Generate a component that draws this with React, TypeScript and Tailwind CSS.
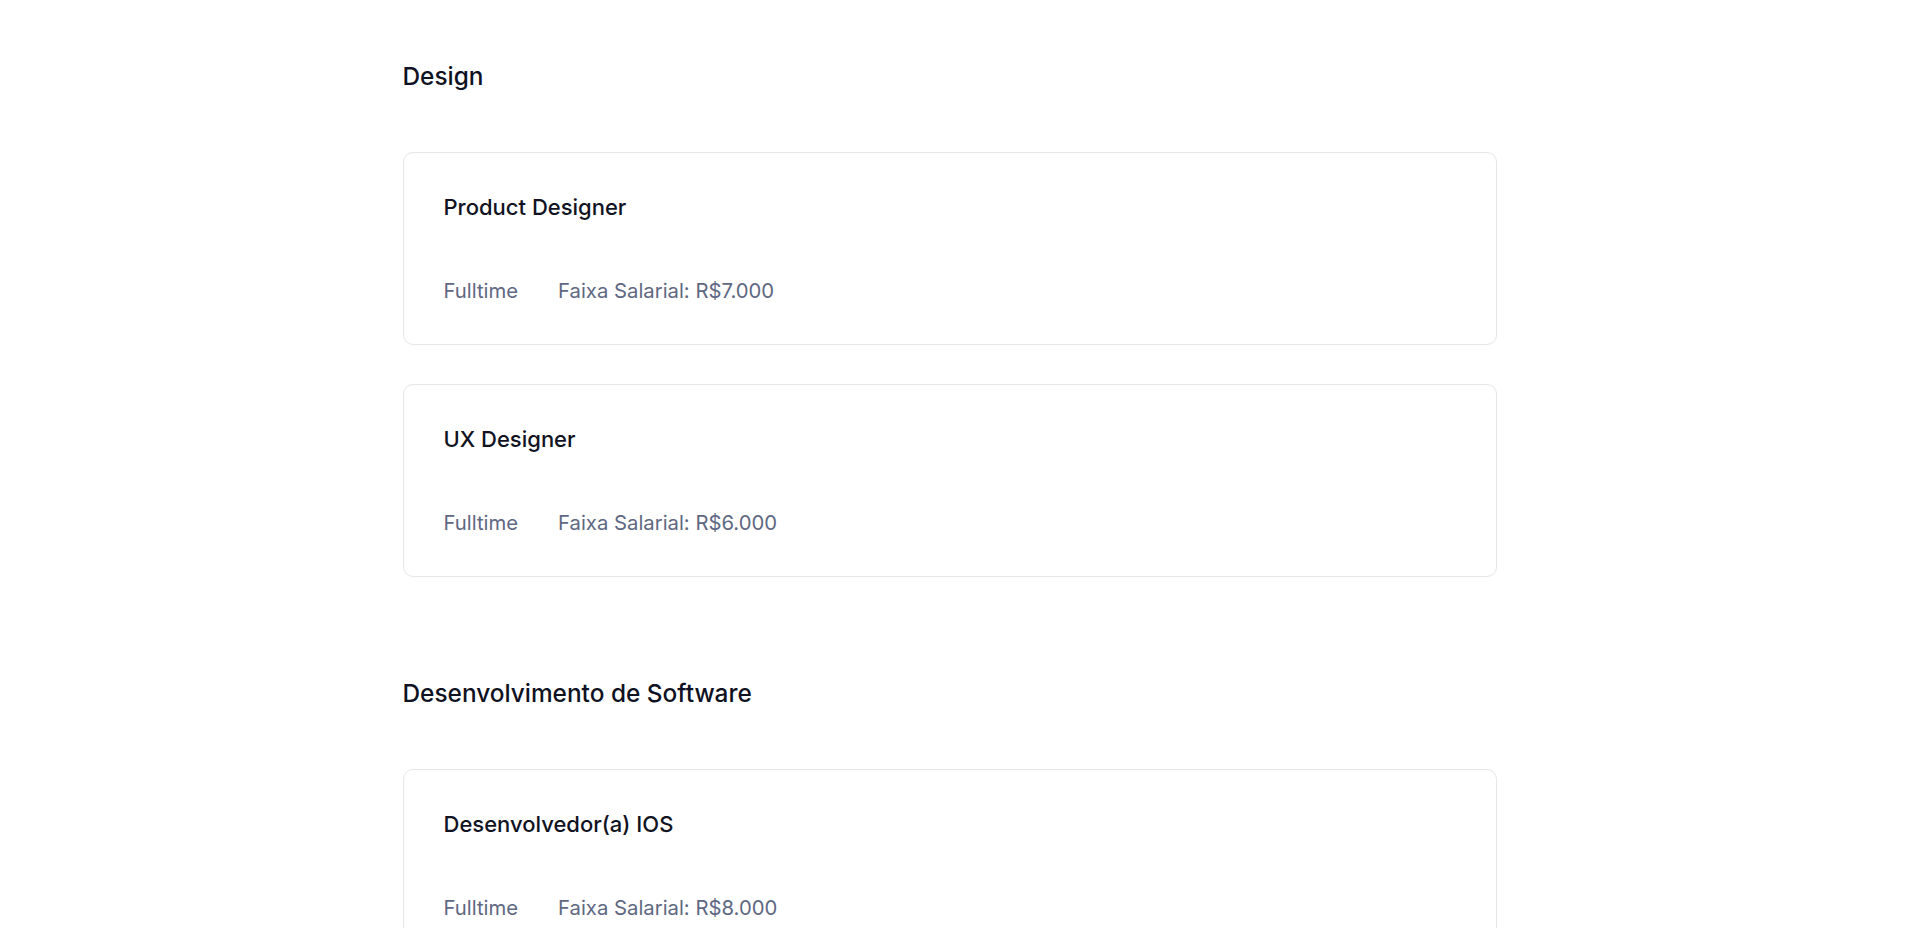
import React from 'react';

type Vaga = {
  id: number;
  title: string;
  type: string;
  salary: string;
};

type Area = {
  name: string;
  vagas: Vaga[];
};

const AREAS: Area[] = [
  {
    name: 'Design',
    vagas: [
      { id: 1, title: 'Product Designer', type: 'Fulltime', salary: 'R$7.000' },
      { id: 2, title: 'UX Designer', type: 'Fulltime', salary: 'R$6.000' },
    ],
  },
  {
    name: 'Desenvolvimento de Software',
    vagas: [
      { id: 3, title: 'Desenvolvedor(a) IOS', type: 'Fulltime', salary: 'R$8.000' },
      { id: 4, title: 'Desenvolvedor(a) Android', type: 'Fulltime', salary: 'R$8.000' },
    ],
  },
];

const VagaCard: React.FC<{ vaga: Vaga }> = ({ vaga }) => (
  <div className="rounded-[10px] border border-[#e6e6eb] bg-white px-10 pt-10 pb-[39px]">
    <h3 className="text-[22px] leading-7 font-medium text-[#111322]">{vaga.title}</h3>
    <div className="mt-[56px] flex items-center gap-10 text-[20.3px] leading-7 text-[#5e6882]">
      <span>{vaga.type}</span>
      <span>Faixa Salarial: {vaga.salary}</span>
    </div>
  </div>
);

export default function App() {
  return (
    <div className="min-h-screen bg-white pr-[19px] font-['Inter','Noto_Sans',sans-serif]">
      <main className="mx-auto max-w-[1094px] pb-24">
        {AREAS.map(area => (
          <section key={area.name} className="pt-[60px] pb-10">
            <h2 className="text-[24.4px] leading-8 font-medium text-[#0f1222]">{area.name}</h2>
            <div className="mt-[60px] flex flex-col gap-[39px]">
              {area.vagas.map(vaga => (
                <VagaCard key={vaga.id} vaga={vaga} />
              ))}
            </div>
          </section>
        ))}
      </main>
    </div>
  );
}
